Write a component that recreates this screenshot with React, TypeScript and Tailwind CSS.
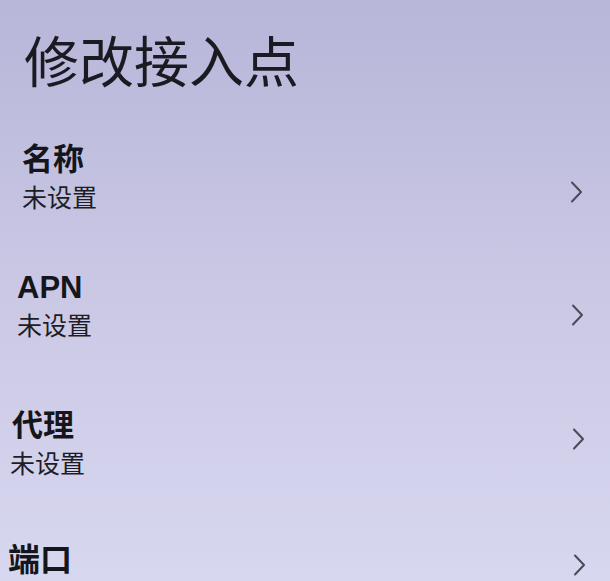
import React from "react";

const Chevron = () => (
  <svg width="13" height="22" viewBox="0 0 13 22" fill="none">
    <path d="M2 1.5 L11 11 L2 20.5" stroke="#4a4a58" strokeWidth="2" strokeLinecap="round" strokeLinejoin="round" />
  </svg>
);

type RowProps = {
  title: string;
  sub?: string;
  mt: string;
  pl: string;
  subPl?: string;
  pr: string;
  chevMt: string;
  size?: string;
};

const Row = ({ title, sub, mt, pl, subPl, pr, chevMt, size }: RowProps) => (
  <div className={`flex justify-between ${mt} ${pr}`}>
    <div className="flex flex-col">
      <div className={`${size ?? "text-[31px]"} leading-[36px] font-bold text-[#15151c] ${pl}`}>{title}</div>
      {sub && (
        <div className={`mt-[5px] text-[25px] leading-[30px] text-[#1d1d26] ${subPl ?? pl}`}>{sub}</div>
      )}
    </div>
    <div className={`self-start ${chevMt}`}>
      <Chevron />
    </div>
  </div>
);

export default function App() {
  return (
    <div
      className="w-[610px] h-[581px] overflow-hidden bg-gradient-to-b from-[#b8b6d9] via-[#cac8e4] to-[#d8d7f0] pt-[33px]"
      style={{ fontFamily: '"Liberation Sans", "Noto Sans CJK SC", sans-serif' }}
    >
      <div className="pl-[24px] text-[55px] leading-[60px] font-normal text-[#1a1a22]">修改接入点</div>
      <Row title="名称" sub="未设置" mt="mt-[49px]" pl="pl-[22px]" pr="pr-[27px]" chevMt="mt-[39px]" />
      <Row title="APN" sub="未设置" mt="mt-[57px]" pl="pl-[17px]" pr="pr-[26px]" chevMt="mt-[34px]" />
      <Row title="代理" sub="未设置" mt="mt-[67px]" pl="pl-[12px]" subPl="pl-[10px]" pr="pr-[25px]" chevMt="mt-[20px]" />
      <Row title="端口" mt="mt-[63px]" pl="pl-[8px]" pr="pr-[24px]" chevMt="mt-[12px]" size="text-[32px]" />
    </div>
  );
}
